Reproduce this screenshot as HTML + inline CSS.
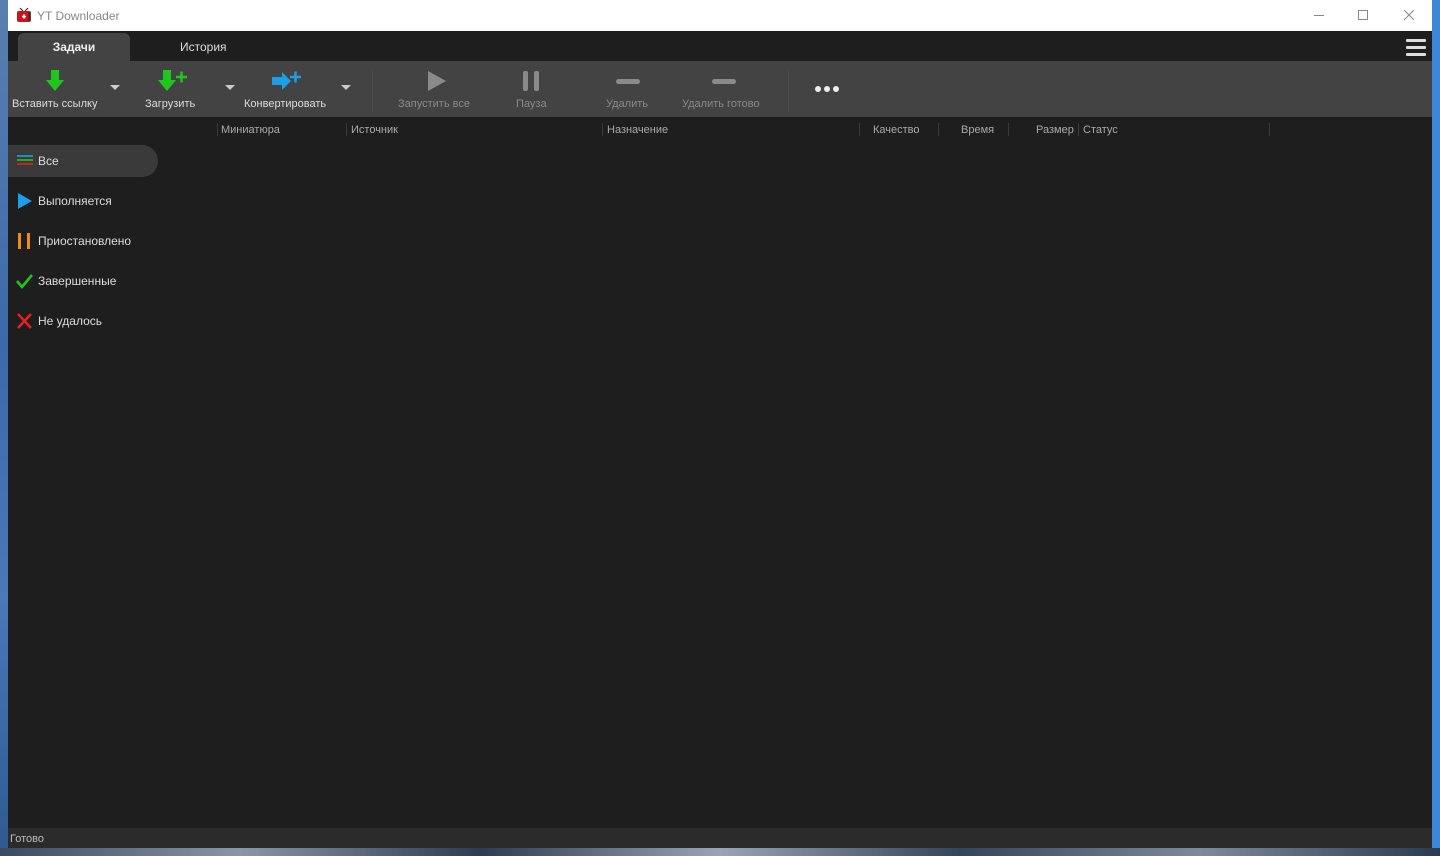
<!DOCTYPE html>
<html><head><meta charset="utf-8"><style>
*{margin:0;padding:0;box-sizing:border-box}
body{width:1440px;height:856px;overflow:hidden;background:#2a3a52;font-family:"Liberation Sans","DejaVu Sans",sans-serif;position:relative}
.ls{position:absolute;left:0;top:0;width:8px;height:856px;background:linear-gradient(#5a7fb0,#3c6aa8 40%,#4a78b8 70%,#2e5a90)}
.rs{position:absolute;right:0;top:0;width:8px;height:856px;background:#3f86d8}
.bot{position:absolute;left:0;bottom:0;width:1440px;height:8px;background:linear-gradient(90deg,#3a4a60,#8a96a8,#2d3c52,#9aa4b4,#34445a,#7d8a9c,#2a3a50)}
.win{position:absolute;left:8px;top:0;width:1424px;height:848px;background:#1e1e1e}
.title{position:absolute;left:0;top:0;width:1424px;height:31px;background:#fff;font-size:12px;color:#888}
.tabs{position:absolute;left:0;top:31px;width:1424px;height:30px;background:#1e1e1e}
.tab1{position:absolute;left:10px;top:2px;width:112px;height:28px;background:#434343;border-radius:6px 6px 0 0;color:#eee;font-size:12px;font-weight:bold;text-align:center;line-height:28px}
.tab2{position:absolute;left:172px;top:9px;color:#ddd;font-size:12px}
.tb{position:absolute;left:0;top:61px;width:1424px;height:56px;background:#434343}
.lbl{position:absolute;top:37px;font-size:11px;color:#ddd;white-space:nowrap}
.dis{color:#8a8a8a}
.hdr{position:absolute;top:117px;left:0;width:1424px;height:24px;font-size:11px;color:#aaa}
.hdr span{position:absolute;top:7px}
.sep{position:absolute;top:6px;width:1px;height:13px;background:#3a3a3a}
.side{position:absolute;left:0;top:145px}
.it{position:absolute;left:0;width:150px;height:32px;font-size:12px;color:#ddd}
.it span{position:absolute;left:30px;top:9px}
.it svg{position:absolute;left:8px;top:8px}
.status{position:absolute;left:0;top:828px;width:1424px;height:20px;background:#2b2b2b;color:#bbb;font-size:11px;padding:5px 2px}
</style></head><body>
<div class="ls"></div><div class="rs"></div><div class="bot"></div>
<div class="win">
<div class="title">
<svg style="position:absolute;left:8px;top:7px" width="16" height="16" viewBox="0 0 16 16"><path d="M4 1l3 3M12 1l-3 3" stroke="#333" stroke-width="1.2"/><rect x="1" y="4" width="14" height="11" rx="2" fill="#c8161d"/><rect x="12" y="5" width="2" height="9" fill="#333"/><path d="M6 9.5h4M8 7.5v4" stroke="#fff" stroke-width="1.6"/></svg>
<span style="position:absolute;left:29px;top:9px">YT Downloader</span>
<div style="position:absolute;left:1306px;top:15px;width:10px;height:1px;background:#888"></div>
<div style="position:absolute;left:1350px;top:10px;width:10px;height:10px;border:1px solid #888"></div>
<svg style="position:absolute;left:1395px;top:9px" width="12" height="12"><path d="M1 1L11 11M11 1L1 11" stroke="#888" stroke-width="1"/></svg>
</div>
<div class="tabs"><div class="tab1">Задачи</div><div class="tab2">История</div>
<div style="position:absolute;left:1398px;top:8px;width:20px;height:3px;background:#ddd;border-radius:1px;box-shadow:0 7px 0 #ddd,0 14px 0 #ddd"></div></div>
<div class="tb">
<svg style="position:absolute;left:38px;top:9px" width="18" height="22"><path d="M5 0h8v10h5l-9 11-9-11h5z" fill="#1ec61e"/></svg>
<span class="lbl" style="left:4px">Вставить ссылку</span>
<svg style="position:absolute;left:102px;top:24px" width="10" height="6"><path d="M0 0h10L5 5z" fill="#ccc"/></svg>
<svg style="position:absolute;left:150px;top:9px" width="34" height="22"><path d="M5 0h8v10h5l-9 11-9-11h5z" fill="#1ec61e"/><path d="M18 7h11M23.5 1.5v11" stroke="#1ec61e" stroke-width="2.5"/></svg>
<span class="lbl" style="left:137px">Загрузить</span>
<svg style="position:absolute;left:217px;top:24px" width="10" height="6"><path d="M0 0h10L5 5z" fill="#ccc"/></svg>
<svg style="position:absolute;left:264px;top:9px" width="34" height="22"><path d="M0 7h10V2l9 9-9 9v-5H0z" fill="#1e9ee8"/><path d="M18 7h11M23.5 1.5v11" stroke="#1e9ee8" stroke-width="2.5"/></svg>
<span class="lbl" style="left:236px">Конвертировать</span>
<svg style="position:absolute;left:333px;top:24px" width="10" height="6"><path d="M0 0h10L5 5z" fill="#ccc"/></svg>
<div style="position:absolute;left:364px;top:10px;width:1px;height:40px;background:#4d4d4d"></div>
<svg style="position:absolute;left:419px;top:10px" width="20" height="20"><path d="M1 0l18 10-18 10z" fill="#8a8a8a"/></svg>
<span class="lbl dis" style="left:390px">Запустить все</span>
<div style="position:absolute;left:515px;top:10px;width:5px;height:20px;background:#8a8a8a;border-radius:2px"></div>
<div style="position:absolute;left:526px;top:10px;width:5px;height:20px;background:#8a8a8a;border-radius:2px"></div>
<span class="lbl dis" style="left:508px">Пауза</span>
<div style="position:absolute;left:608px;top:18px;width:24px;height:5px;background:#8a8a8a;border-radius:3px"></div>
<span class="lbl dis" style="left:598px">Удалить</span>
<div style="position:absolute;left:704px;top:18px;width:24px;height:5px;background:#8a8a8a;border-radius:3px"></div>
<span class="lbl dis" style="left:674px">Удалить готово</span>
<div style="position:absolute;left:780px;top:10px;width:1px;height:40px;background:#4d4d4d"></div>
<div style="position:absolute;left:807px;top:25px;width:6px;height:6px;background:#eee;border-radius:3px;box-shadow:9px 0 0 #eee,18px 0 0 #eee"></div>
</div>
<div class="hdr">
<div class="sep" style="left:209px"></div><span style="left:213px">Миниатюра</span>
<div class="sep" style="left:338px"></div><span style="left:343px">Источник</span>
<div class="sep" style="left:594px"></div><span style="left:599px">Назначение</span>
<div class="sep" style="left:851px"></div><span style="left:865px">Качество</span>
<div class="sep" style="left:930px"></div><span style="left:953px">Время</span>
<div class="sep" style="left:1000px"></div><span style="left:1028px">Размер</span>
<div class="sep" style="left:1070px"></div><span style="left:1075px">Статус</span>
<div class="sep" style="left:1261px"></div>
</div>
<div class="side">
<div class="it" style="top:0;background:#3a3a3a;border-radius:0 16px 16px 0"><svg width="18" height="16"><path d="M1 3h16" stroke="#1e9ee8" stroke-width="1.6"/><path d="M1 7h16" stroke="#1ec61e" stroke-width="1.6"/><path d="M1 11h16" stroke="#e02020" stroke-width="1.6"/></svg><span>Все</span></div>
<div class="it" style="top:40px"><svg width="18" height="18"><path d="M2 0l14 8-14 8z" fill="#1e9ee8"/></svg><span>Выполняется</span></div>
<div class="it" style="top:80px"><svg width="18" height="18"><rect x="2" y="0" width="3" height="16" fill="#f08a10"/><rect x="11" y="0" width="3" height="16" fill="#f08a10"/></svg><span>Приостановлено</span></div>
<div class="it" style="top:120px"><svg width="18" height="18"><path d="M1 8l5 6L16 2" stroke="#1ec61e" stroke-width="2.6" fill="none"/></svg><span>Завершенные</span></div>
<div class="it" style="top:160px"><svg width="18" height="18"><path d="M2 1l13 14M15 1L2 15" stroke="#e82020" stroke-width="2.4"/></svg><span>Не удалось</span></div>
</div>
<div class="status">Готово</div>
</div>
</body></html>
